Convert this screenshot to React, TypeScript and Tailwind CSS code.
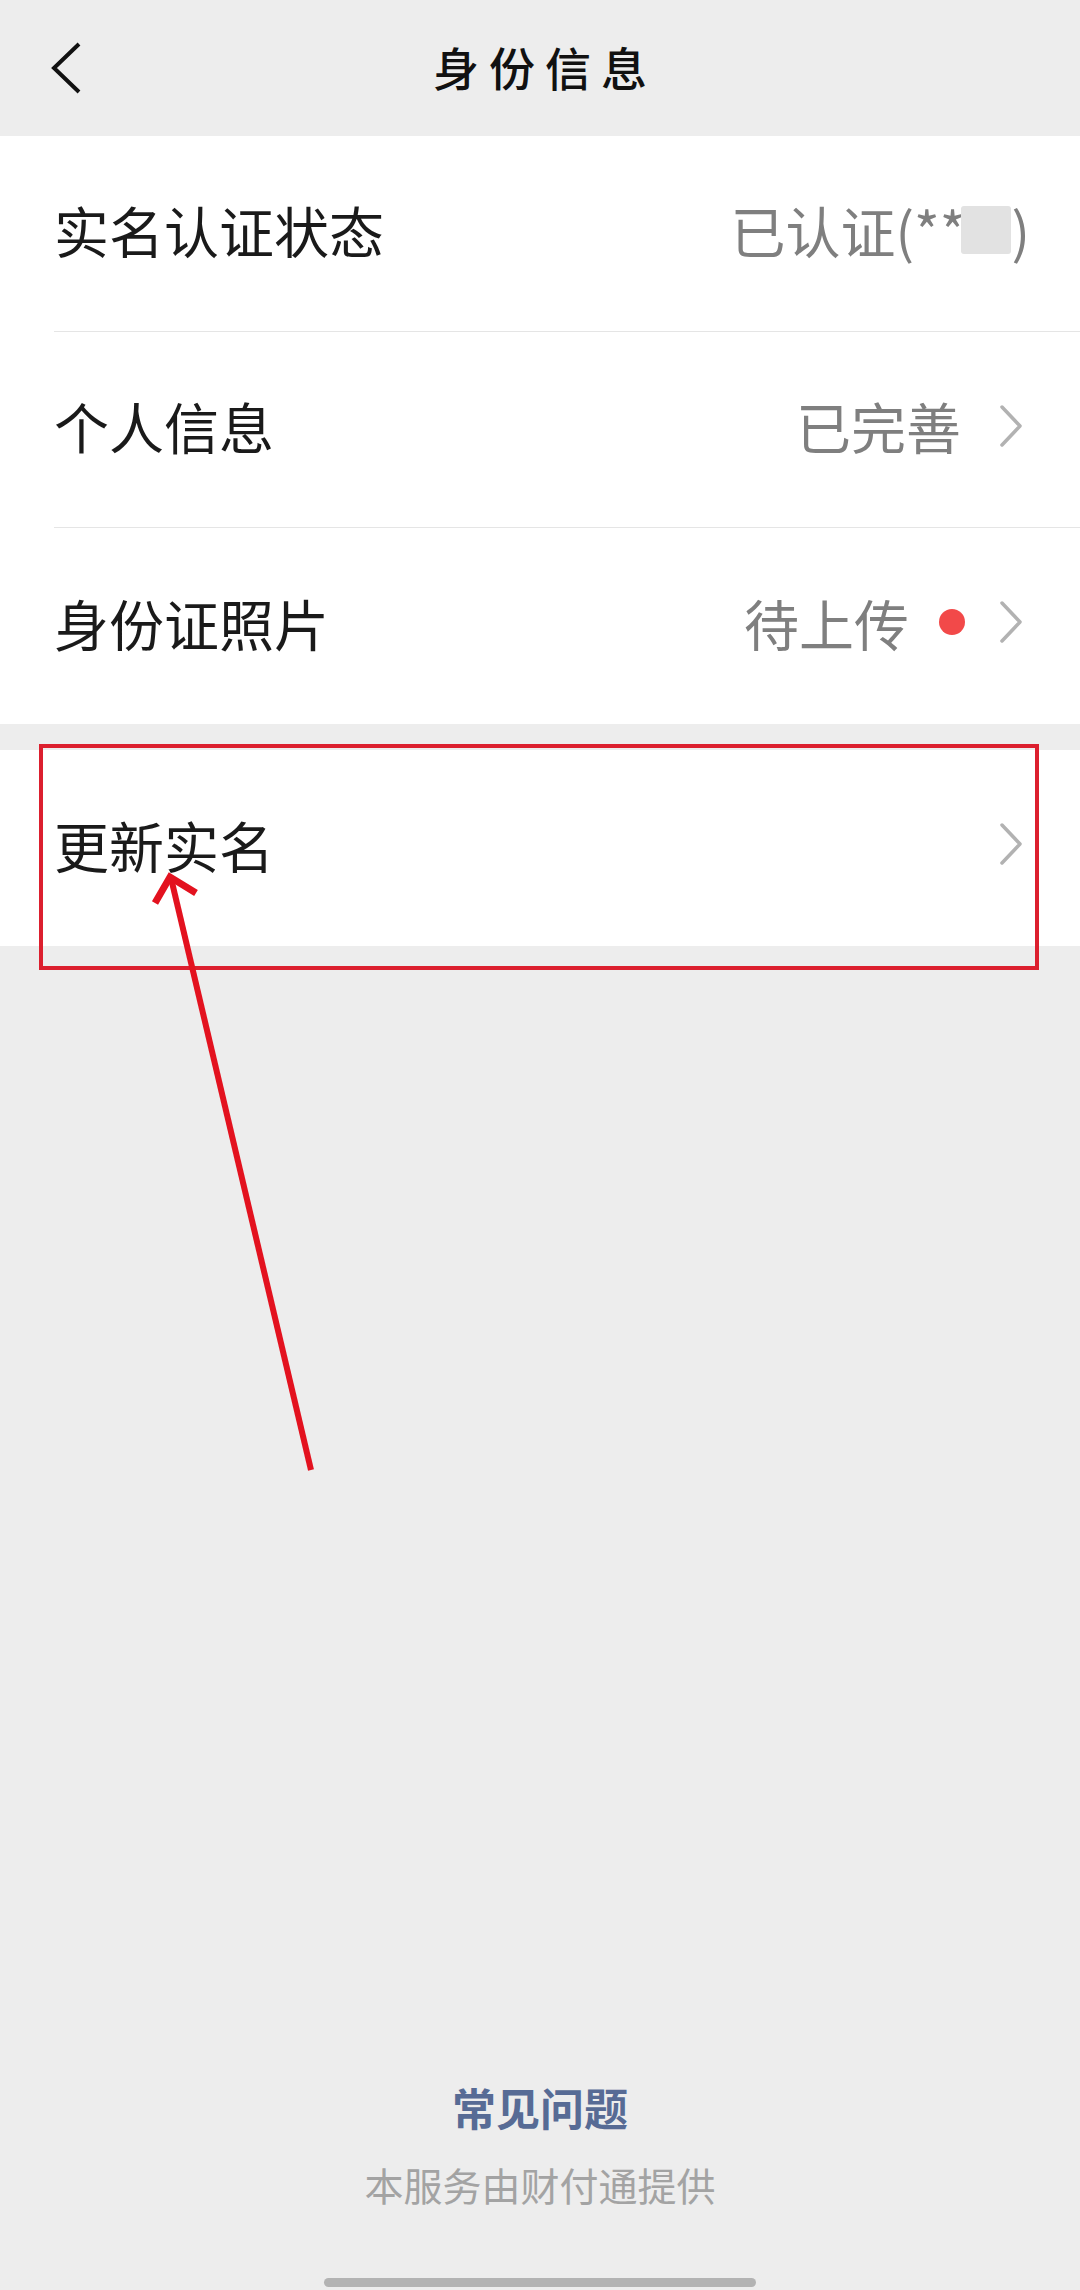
import React from 'react';

const Chevron: React.FC = () => (
  <svg width="24" height="44" viewBox="0 0 24 44" fill="none" className="shrink-0">
    <polyline points="3,3 21,22 3,41" stroke="#b2b2b2" strokeWidth="3.5" strokeLinecap="round" strokeLinejoin="round" />
  </svg>
);

const App: React.FC = () => {
  return (
    <div className="relative w-[1080px] h-[2290px] bg-[#ededed] font-['Noto_Sans_CJK_SC',sans-serif] flex flex-col overflow-hidden">
      {/* Header */}
      <div className="h-[136px] shrink-0 grid grid-cols-[120px_1fr_120px] items-center">
        <div className="pl-[50px] flex items-center">
          <svg width="32" height="52" viewBox="0 0 32 52" fill="none">
            <polyline points="29,2 4,26 29,50" stroke="#111" strokeWidth="4" strokeLinejoin="miter" />
          </svg>
        </div>
        <div className="text-center text-[46px] font-medium tracking-[10px] text-[#111] pl-[10px] leading-none pb-[4px]">身份信息</div>
        <div />
      </div>

      {/* Section 1 */}
      <div className="bg-white">
        <div className="pl-[54px]">
          <div className="h-[196px] flex items-center justify-between pr-[50px] pb-[8px] border-b border-[#e5e5e5]">
            <span className="text-[55px] text-[#1a1a1a] leading-none">实名认证状态</span>
            <span className="flex items-center text-[55px] text-[#7f7f7f] leading-none">
              已认证(**
              <span className="inline-block w-[50px] h-[48px] bg-[#e2e2e2] rounded-[3px] -ml-[4px]" />
              )
            </span>
          </div>
        </div>
        <div className="pl-[54px]">
          <div className="h-[196px] flex items-center justify-between pr-[57px] pb-[8px] border-b border-[#e5e5e5]">
            <span className="text-[55px] text-[#1a1a1a] leading-none">个人信息</span>
            <span className="flex items-center gap-[38px]">
              <span className="text-[55px] text-[#7f7f7f] leading-none">已完善</span>
              <Chevron />
            </span>
          </div>
        </div>
        <div className="pl-[54px]">
          <div className="h-[196px] flex items-center justify-between pr-[57px] pb-[8px]">
            <span className="text-[55px] text-[#1a1a1a] leading-none">身份证照片</span>
            <span className="flex items-center">
              <span className="text-[55px] text-[#7f7f7f] leading-none">待上传</span>
              <span className="ml-[30px] mr-[34px] w-[26px] h-[26px] rounded-full bg-[#f24949]" />
              <Chevron />
            </span>
          </div>
        </div>
      </div>

      {/* Section 2 */}
      <div className="bg-white mt-[26px]">
        <div className="pl-[54px]">
          <div className="h-[196px] flex items-center justify-between pr-[57px] pb-[8px]">
            <span className="text-[55px] text-[#1a1a1a] leading-none">更新实名</span>
            <Chevron />
          </div>
        </div>
      </div>

      <div className="flex-1" />

      {/* Footer */}
      <div className="flex flex-col items-center pb-[74px]">
        <div className="text-[44px] font-bold text-[#576b95] leading-none">常见问题</div>
        <div className="mt-[36px] text-[39px] text-[#a3a3a3] leading-none">本服务由财付通提供</div>
      </div>
      <div className="h-[12px] flex justify-center">
        <div className="w-[432px] h-[9px] rounded-full bg-[#b3b3b3]" />
      </div>

      {/* Annotation overlay */}
      <div className="absolute left-[39px] top-[744px] w-[1000px] h-[226px] border-[4px] border-[#dc1f2e] pointer-events-none" />
      <svg className="absolute left-0 top-0 pointer-events-none" width="1080" height="2290" viewBox="0 0 1080 2290" fill="none">
        <line x1="311" y1="1470" x2="171" y2="878" stroke="#e3121f" strokeWidth="6" />
        <polyline points="155,903 170,877 196,893" stroke="#e3121f" strokeWidth="7" strokeLinejoin="miter" />
      </svg>
    </div>
  );
};

export default App;
